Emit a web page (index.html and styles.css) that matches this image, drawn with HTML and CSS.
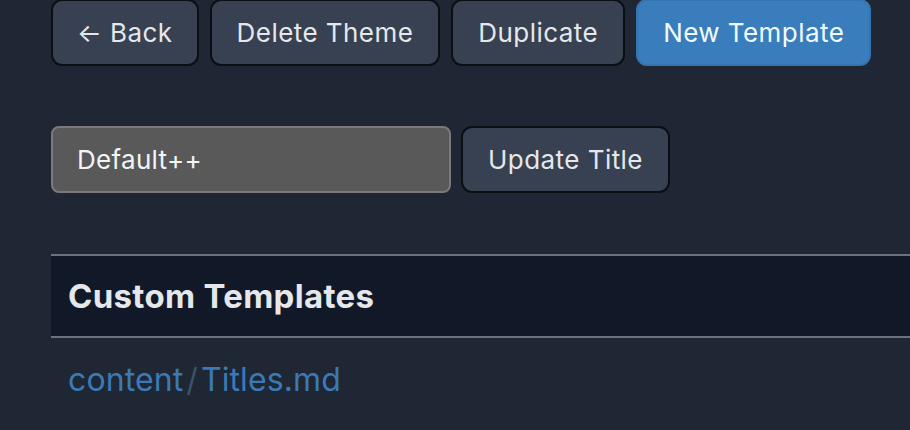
FILE: index.html
```html
<!DOCTYPE html>
<html>
<head>
<meta charset="utf-8">
<link rel="stylesheet" href="styles.css">
</head>
<body>
<div class="page">
  <div class="toolbar">
    <button class="btn btn-back">← Back</button>
    <button class="btn">Delete Theme</button>
    <button class="btn">Duplicate</button>
    <button class="btn btn-primary">New Template</button>
  </div>
  <div class="title-row">
    <input class="title-input" type="text" value="Default++">
    <button class="btn btn-small">Update Title</button>
  </div>
  <table class="templates">
    <thead>
      <tr><th>Custom Templates</th></tr>
    </thead>
    <tbody>
      <tr><td><a class="link" href="#">content<span class="sep">/</span>Titles.md</a></td></tr>
    </tbody>
  </table>
</div>
</body>
</html>
```
FILE: styles.css
```css
html, body {
  margin: 0;
  padding: 0;
  background: #1f2734;
  height: 100%;
  overflow: hidden;
}
body {
  font-family: Inter, "Noto Sans", sans-serif;
  color: #e5e7eb;
}
.page {
  padding-left: 51px;
  width: 859px;
  overflow: hidden;
}
.toolbar {
  display: flex;
  gap: 11px;
  margin-top: -1px;
}
.btn {
  font-family: inherit;
  font-size: 26px;
  letter-spacing: 0.45px;
  color: #e5e7eb;
  background: #374151;
  border: 2px solid #0b0e13;
  border-radius: 11px;
  height: 67px;
  padding: 0 25px;
  line-height: 1;
}
.btn-back {
  padding: 0 24px;
}
.btn-primary {
  background: #3a7dbd;
  border-color: #3674b0;
  color: #effbff;
}
.title-row {
  display: flex;
  gap: 10px;
  margin-top: 60px;
  align-items: stretch;
}
.title-input {
  font-family: inherit;
  font-size: 26px;
  letter-spacing: 0.3px;
  color: #f3f4f6;
  background: #595959;
  border: 2px solid #7a7a7a;
  border-radius: 8px;
  width: 400px;
  height: 67px;
  box-sizing: border-box;
  padding: 0 24px;
  outline: none;
}
.btn-small {
  padding: 0 25px;
  height: 67px;
}
.templates {
  border-collapse: collapse;
  width: 100%;
  margin-top: 61px;
}
.templates th {
  background: #111827;
  border-top: 2px solid #6b7280;
  border-bottom: 2px solid #6b7280;
  text-align: left;
  font-size: 33px;
  letter-spacing: 0.3px;
  font-weight: 700;
  padding: 0 17px;
  height: 80px;
  color: #e5e7eb;
}
.templates td {
  padding: 0 17px;
  height: 82px;
  font-size: 32px;
  letter-spacing: 0.1px;
}
.link {
  color: #3b7ab6;
  text-decoration: none;
}
.sep {
  color: #3c5068;
  margin: 0 3px;
}
```
